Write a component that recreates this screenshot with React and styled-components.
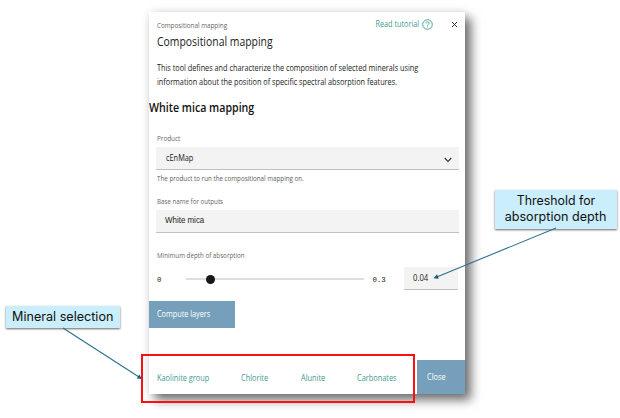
import React from "react";
import styled, { createGlobalStyle } from "styled-components";

const GlobalStyle = createGlobalStyle`
  * { box-sizing: border-box; }
  body { margin: 0; background: #fff; }
`;

const Page = styled.main`
  position: relative;
  width: 620px;
  height: 418px;
  padding: 12px 0 0 149px;
  overflow: hidden;
  background: #fff;
  color: #222;
  font-family: "Open Sans", sans-serif;
  white-space: nowrap;
`;

const Narrow = styled.span`
  display: inline-block;
  transform: scaleX(${(p) => p.$x || 0.9});
  transform-origin: ${(p) => p.$origin || "left"} center;
`;

const Dialog = styled.section`
  display: flex;
  flex-direction: column;
  width: 316px;
  height: 382px;
  background: #fff;
  box-shadow: 6px 6px 10px rgba(0, 0, 0, 0.56), 0 0 9px rgba(0, 0, 0, 0.09);
`;

const Header = styled.header`
  display: flex;
  justify-content: space-between;
  height: 49px;
  padding: 7px 6px 0 8px;
`;

const Eyebrow = styled.div`
  font-size: 7.3px;
  line-height: 12px;
  color: #666;
`;

const Title = styled.h1`
  margin: 1px 0 0;
  font-size: 11.8px;
  font-weight: 400;
  line-height: 18px;
`;

const HeaderActions = styled.div`
  display: flex;
  align-items: center;
  height: 11px;
`;

const TutorialLink = styled.a`
  display: flex;
  align-items: center;
  gap: 3px;
  font-size: 8.2px;
  line-height: 10px;
  color: #3f9a92;
`;

const TutorialText = styled.span`
  margin-bottom: 2px;
`;

const CloseIcon = styled.svg`
  margin-left: 17px;
`;

const Description = styled.p`
  margin: 0 0 0 8px;
  font-size: 8.2px;
  line-height: 13.5px;
`;

const SectionTitle = styled.h2`
  margin: 11px 0 15px;
  font-size: 12px;
  font-weight: 600;
  line-height: 18px;
  color: #111;
`;

const Label = styled.label`
  display: block;
  height: 12px;
  margin: ${(p) => p.$top || 0}px 0 ${(p) => p.$gap}px 8px;
  font-size: 7.3px;
  line-height: 12px;
  color: #666;
`;

const Field = styled.div`
  display: flex;
  align-items: center;
  justify-content: space-between;
  width: ${(p) => p.$width || 303}px;
  height: 23px;
  margin-left: ${(p) => (p.$inline ? 0 : 7)}px;
  padding: 0 7px ${(p) => p.$lift || 0}px ${(p) => p.$pad || 9}px;
  border-bottom: 1px solid #c0c0c0;
  background: #f3f3f3;
  font-family: ${(p) => (p.$plain ? '"Liberation Sans", sans-serif' : "inherit")};
  font-size: 8.2px;
  line-height: 20px;
`;

const Chevron = styled.svg`
  margin-top: 4px;
`;

const Helper = styled.div`
  height: 12px;
  margin: 2px 0 11px 8px;
  font-size: 7.3px;
  line-height: 12px;
  color: #5c5c5c;
`;

const SliderRow = styled.div`
  display: flex;
  align-items: center;
  height: 23px;
  margin: 0 0 11px 8px;
`;

const Bound = styled.span`
  width: ${(p) => p.$width}px;
  padding-top: 2px;
  font-family: "Liberation Mono", monospace;
  font-size: 7.4px;
  line-height: 12px;
`;

const Track = styled.div`
  display: flex;
  align-items: center;
  width: 177.5px;
  height: 2px;
  margin: 1px 9px 0 0;
  background: #dedede;
`;

const Thumb = styled.div`
  width: 9px;
  height: 9px;
  margin-left: 20px;
  border-radius: 50%;
  background: #171717;
`;

const Button = styled.button`
  width: ${(p) => p.$width}px;
  height: ${(p) => p.$height}px;
  padding: 0 0 ${(p) => p.$lift || 0}px ${(p) => p.$pad}px;
  border: 0;
  background: #759fbb;
  color: #fff;
  font: inherit;
  font-size: 8.2px;
  line-height: 12px;
  text-align: left;
`;

const Footer = styled.footer`
  display: flex;
  align-items: center;
  height: 34px;
  margin-top: auto;
  padding-left: 8px;
`;

const Tab = styled.a`
  width: ${(p) => p.$width}px;
  padding-top: 1px;
  font-size: 8.2px;
  line-height: 12px;
  color: #3f9a92;
`;

const Highlight = styled.div`
  position: absolute;
  left: 141px;
  top: 354px;
  width: 274px;
  height: 49px;
  border: 2px solid #fb1010;
`;

const Callout = styled.div`
  position: absolute;
  left: ${(p) => p.$x}px;
  top: ${(p) => p.$y}px;
  width: ${(p) => p.$width}px;
  padding: ${(p) => p.$pad}px 0;
  background: #caeefb;
  box-shadow: 0 1px 2px rgba(0, 0, 0, 0.6);
  font-family: Inter, sans-serif;
  font-size: 12.6px;
  line-height: 16.5px;
  text-align: center;
  color: #111;
`;

const Arrows = styled.svg`
  position: absolute;
  left: 0;
  top: 0;
`;

const minerals = [
  ["Kaolinite group", 84],
  ["Chlorite", 59.5],
  ["Alunite", 56],
  ["Carbonates", 60.5],
];

export default function App() {
  return (
    <Page>
      <GlobalStyle />
      <Dialog>
        <Header>
          <div>
            <Eyebrow><Narrow $x={0.865}>Compositional mapping</Narrow></Eyebrow>
            <Title><Narrow $x={0.882}>Compositional mapping</Narrow></Title>
          </div>
          <HeaderActions>
            <TutorialLink>
              <TutorialText><Narrow $x={0.89} $origin="right">Read tutorial</Narrow></TutorialText>
              <svg width="11" height="11" viewBox="0 0 11 11" fill="none" stroke="#3f9a92" strokeWidth="0.9">
                <circle cx="5.5" cy="5.5" r="4.8" />
                <path d="M3.9 4.4C3.9 2.4 7.1 2.4 7.1 4.3C7.1 5.3 5.5 5.3 5.5 6.6M5.5 7.4V8.4" />
              </svg>
            </TutorialLink>
            <CloseIcon width="9" height="9" viewBox="0 0 9 9" fill="none" stroke="#222" strokeWidth="0.95">
              <path d="M2 2L7 7M7 2L2 7" />
            </CloseIcon>
          </HeaderActions>
        </Header>
        <Description>
          <Narrow $x={0.89}>
            This tool defines and characterize the composition of selected minerals using
            <br />
            information about the position of specific spectral absorption features.
          </Narrow>
        </Description>
        <SectionTitle><Narrow $x={0.885}>White mica mapping</Narrow></SectionTitle>

        <Label $gap={3}><Narrow $x={0.865}>Product</Narrow></Label>
        <Field $pad={10} $lift={1}>
          <Narrow>cEnMap</Narrow>
          <Chevron width="8" height="6" viewBox="0 0 8 6" fill="none" stroke="#333" strokeWidth="1.1">
            <path d="M0.7 1L4 4.4L7.3 1" />
          </Chevron>
        </Field>
        <Helper><Narrow $x={0.855}>The product to run the compositional mapping on.</Narrow></Helper>

        <Label $gap={3}><Narrow $x={0.85}>Base name for outputs</Narrow></Label>
        <Field $plain><Narrow $x={0.97}>White mica</Narrow></Field>

        <Label $top={16} $gap={6}><Narrow $x={0.855}>Minimum depth of absorption</Narrow></Label>
        <SliderRow>
          <Bound $width={29}>0</Bound>
          <Track>
            <Thumb />
          </Track>
          <Bound $width={31.5}>0.3</Bound>
          <Field $inline $width={54} $lift={1}><Narrow $x={0.94}>0.04</Narrow></Field>
        </SliderRow>

        <Button $width={85.5} $height={27} $pad={8} $lift={1}><Narrow $x={0.89}>Compute layers</Narrow></Button>

        <Footer>
          {minerals.map(([name, width]) => (
            <Tab key={name} $width={width}><Narrow>{name}</Narrow></Tab>
          ))}
          <Button $width={48} $height={34} $pad={10}><Narrow>Close</Narrow></Button>
        </Footer>
      </Dialog>

      <Highlight />
      <Callout $x={6} $y={306} $width={113.5} $pad={2.7}>Mineral selection</Callout>
      <Callout $x={494.5} $y={189.5} $width={122} $pad={3}>
        <Narrow $x={0.98} $origin="center">Threshold for</Narrow>
        <br />
        absorption depth
      </Callout>
      <Arrows width="620" height="418" fill="none" stroke="#2d7090" strokeWidth="1.1">
        <path d="M63 328L139 377M556 228L438 276.5" />
        <path d="M142 379L136.8 378.5L139.4 374.5ZM433.5 278.3L437 274.3L438.8 278.8Z" fill="#1c5a79" stroke="none" />
      </Arrows>
    </Page>
  );
}
